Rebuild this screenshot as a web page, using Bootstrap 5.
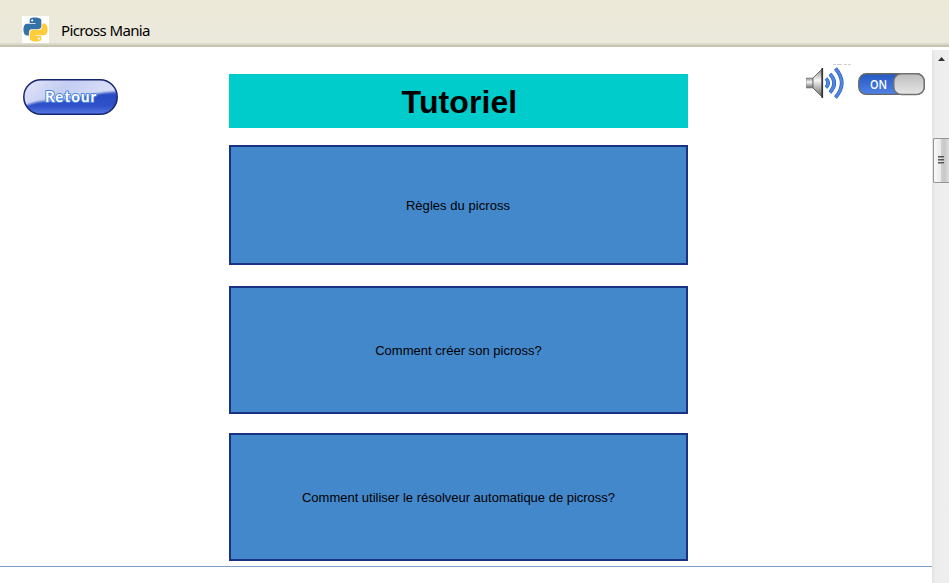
<!DOCTYPE html>
<html lang="fr">
<head>
<meta charset="utf-8">
<title>Picross Mania</title>
<meta name="viewport" content="width=device-width, initial-scale=1">
<link href="https://cdn.jsdelivr.net/npm/bootstrap@5.3.0/dist/css/bootstrap.min.css" rel="stylesheet">
<style>
body{height:583px;font-family:"Liberation Sans",Arial,sans-serif;color:#000;background:#fff}
.titlebar{height:47px;padding:16px 0 0 22px;gap:12px;background:linear-gradient(#ece9d8,#ebe9dc 42px,#dedac9 44px,#c2bfad 46px,#cac7b8)}
.titlebar svg{width:27px;height:27px;background:#fff}
.app-name{font:15px/20px "Noto Sans","Open Sans",sans-serif;padding-top:4px;letter-spacing:-.62px}
.side-left{width:229px;padding:32px 0 0 23px}
.center{width:459px;padding-top:27px}
.side-right{width:244px;padding:16px 7px 0 0;gap:6px}
.screen{height:520px;width:932px;border-bottom:1px solid #7da2c8}
.heading{height:54px;background:#0cc;font-size:32px;font-weight:700;margin-bottom:17px;padding:2px 0 0 2px;letter-spacing:.1px}
.btn-tuto{border:2px solid #1a3282;background:#4488cc;border-radius:0;color:#000;font-size:13px;padding:2px 0 0;height:128px;margin-bottom:19px}
.btn-tuto:first-of-type{height:120px;margin-bottom:21px;padding-right:1px}
.btn-tuto:last-of-type{margin-bottom:0}
.btn-tuto:hover{background:#4e92d6;border-color:#1a3282}
.t1{letter-spacing:.05px}.t2{letter-spacing:.02px}.t3{letter-spacing:-.01px}
.btn-retour{width:95px;height:36px}
.btn-retour text{font:700 15px "Lato",sans-serif;letter-spacing:.8px}
.scroller{width:17px;height:533px;margin-top:3px;background:linear-gradient(90deg,#e2e2e2,#ededed 3px,#efefef)}
.thumb{width:16px;height:45px;margin:74px 0 0 1px;border:1px solid #959595;border-right:0;border-radius:2px 0 0 2px;background:linear-gradient(90deg,#f8f8f8,#eaeaea 45%,#cfcfd2 50%,#c8c8cc 70%,#dedee0)}
</style>
</head>
<body class="overflow-hidden">
<header class="titlebar d-flex align-items-start">
<svg viewBox="-1.5 -1.5 27 27" aria-hidden="true"><defs><path id="snake" d="M14.25.18l.9.2.73.26.59.3.45.32.34.34.25.34.16.33.1.3.04.26.02.2-.01.13V8.5l-.05.63-.13.55-.21.46-.26.38-.3.31-.33.25-.35.19-.35.14-.33.1-.3.07-.26.04-.21.02H8.77l-.69.05-.59.14-.5.22-.41.27-.33.32-.27.35-.2.36-.15.37-.1.35-.07.32-.04.27-.02.21v3.06H3.17l-.21-.03-.28-.07-.32-.12-.35-.18-.36-.26-.36-.36-.35-.46-.32-.59-.28-.73-.21-.88-.14-1.05-.05-1.23.06-1.22.16-1.04.24-.87.32-.71.36-.57.4-.44.42-.33.42-.24.4-.16.36-.1.32-.05.24-.01h.16l.06.01h8.16v-.83H6.18l-.01-2.75-.02-.37.05-.34.11-.31.17-.28.25-.26.31-.23.38-.2.44-.18.51-.15.58-.12.64-.1.71-.06.77-.04.84-.02 1.27.05zm-6.3 1.98l-.23.33-.08.41.08.41.23.34.33.22.41.09.41-.09.33-.22.23-.34.08-.41-.08-.41-.23-.33-.33-.22-.41-.09-.41.09z"/></defs><use href="#snake" fill="#3471a6"/><use href="#snake" fill="#ffcc3a" transform="rotate(180 12 12)"/></svg>
<span class="app-name">Picross Mania</span>
</header>
<div class="d-flex">
<main class="screen d-flex">
<div class="side-left">
<a href="#" class="btn-retour d-block" aria-label="Retour">
<svg class="d-block" width="95" height="36" viewBox="0 0 95 36">
<defs>
<linearGradient id="base" x2="0" y2="1"><stop stop-color="#8aa0e4"/><stop offset=".45" stop-color="#284bc4"/><stop offset=".75" stop-color="#2f50ca"/><stop offset="1" stop-color="#5b7de4"/></linearGradient>
<linearGradient id="gloss" x2="1" y2=".3"><stop stop-color="#e6e9fb"/><stop offset=".5" stop-color="#c3cdf2"/><stop offset="1" stop-color="#dbe1f8"/></linearGradient>
<clipPath id="pill"><rect x="1" y="1" width="93" height="34" rx="17"/></clipPath>
<filter id="soft"><feGaussianBlur stdDeviation="1.3"/></filter>
</defs>
<g clip-path="url(#pill)"><rect width="95" height="36" fill="url(#base)"/><path d="M-2-2H97V12Q80 13 62 17Q40 22 22 22Q8 23-2 29Z" fill="url(#gloss)" filter="url(#soft)"/></g>
<rect x=".8" y=".8" width="93.4" height="34.4" rx="17.2" fill="none" stroke="#17246f" stroke-width="1.5"/>
<text x="22" y="23" textLength="52" lengthAdjust="spacing" fill="#fff" stroke="#4a86de" stroke-width="2" stroke-linejoin="round" paint-order="stroke">Retour</text>
</svg></a>
</div>
<section class="center d-flex flex-column">
<h1 class="heading d-flex flex-shrink-0 align-items-center justify-content-center">Tutoriel</h1>
<button type="button" class="btn btn-tuto flex-shrink-0 t1">Règles du picross</button>
<button type="button" class="btn btn-tuto flex-shrink-0 t2">Comment créer son picross?</button>
<button type="button" class="btn btn-tuto flex-shrink-0 t3">Comment utiliser le résolveur automatique de picross?</button>
</section>
<aside class="side-right d-flex justify-content-end align-items-start">
<svg width="46" height="38" viewBox="0 0 46 38" aria-label="Son">
<defs><linearGradient id="metal" x2="0" y2="1"><stop stop-color="#888"/><stop offset=".4" stop-color="#f6f6f6"/><stop offset=".65" stop-color="#bbb"/><stop offset="1" stop-color="#666"/></linearGradient></defs>
<path d="M0 15H7V25H0Z" fill="url(#metal)" stroke="#888" stroke-width=".7"/>
<path d="M7 15L16 6V34L7 25Z" fill="url(#metal)" stroke="#555" stroke-width=".8"/>
<path d="M16.3 5V35" stroke="#333" stroke-width="1.6"/>
<g fill="none" stroke="#1f4fac" stroke-width="3.6"><path d="M20 15.5Q24.5 20 20 24.5"/><path d="M24 11Q32.5 20 24 29.5"/><path d="M29.5 5.5Q42 20 29.5 34.5"/></g>
<g fill="none" stroke="#4d86e6" stroke-width="2.6"><path d="M20 15.5Q24.5 20 20 24.5"/><path d="M24 11Q32.5 20 24 29.5"/><path d="M29.5 5.5Q42 20 29.5 34.5"/></g>
<path d="M27 1.5H45" stroke="#bbb" stroke-width=".7" stroke-dasharray="3 1 5 2"/>
</svg>
<svg class="mt-2" width="67" height="26" viewBox="0 0 67 26" role="switch" aria-checked="true">
<defs><linearGradient id="track" x2="0" y2="1"><stop stop-color="#2458c2"/><stop offset="1" stop-color="#4f83e4"/></linearGradient><linearGradient id="knob" x2="0" y2="1"><stop stop-color="#bdbdbd"/><stop offset="1" stop-color="#e6e6e6"/></linearGradient></defs>
<rect x=".8" y="2.8" width="65.4" height="20.6" rx="7.5" fill="url(#track)" stroke="#666" stroke-width="1.4"/>
<rect x="35.8" y="2.8" width="30.4" height="20.6" rx="7.5" fill="url(#knob)" stroke="#717171" stroke-width="1.5"/>
<text x="12" y="18" fill="#fff" font-family="Open Sans, sans-serif" font-size="12" font-weight="600" textLength="17" lengthAdjust="spacingAndGlyphs">ON</text>
</svg>
</aside>
</main>
<div class="scroller flex-shrink-0">
<svg class="d-block" width="17" height="14" viewBox="0 0 17 14"><path d="M6 11L9.5 7L13 11Z" fill="#333"/></svg>
<div class="thumb"><svg class="d-block" width="15" height="43" viewBox="0 0 15 43"><path d="M4 17.5H10M4 20.5H10M4 23.5H10" stroke="#555"/><path d="M4 18.5H10M4 21.5H10M4 24.5H10" stroke="#999"/></svg></div>
</div>
</div>
<script src="https://cdn.jsdelivr.net/npm/bootstrap@5.3.0/dist/js/bootstrap.bundle.min.js"></script>
</body>
</html>
